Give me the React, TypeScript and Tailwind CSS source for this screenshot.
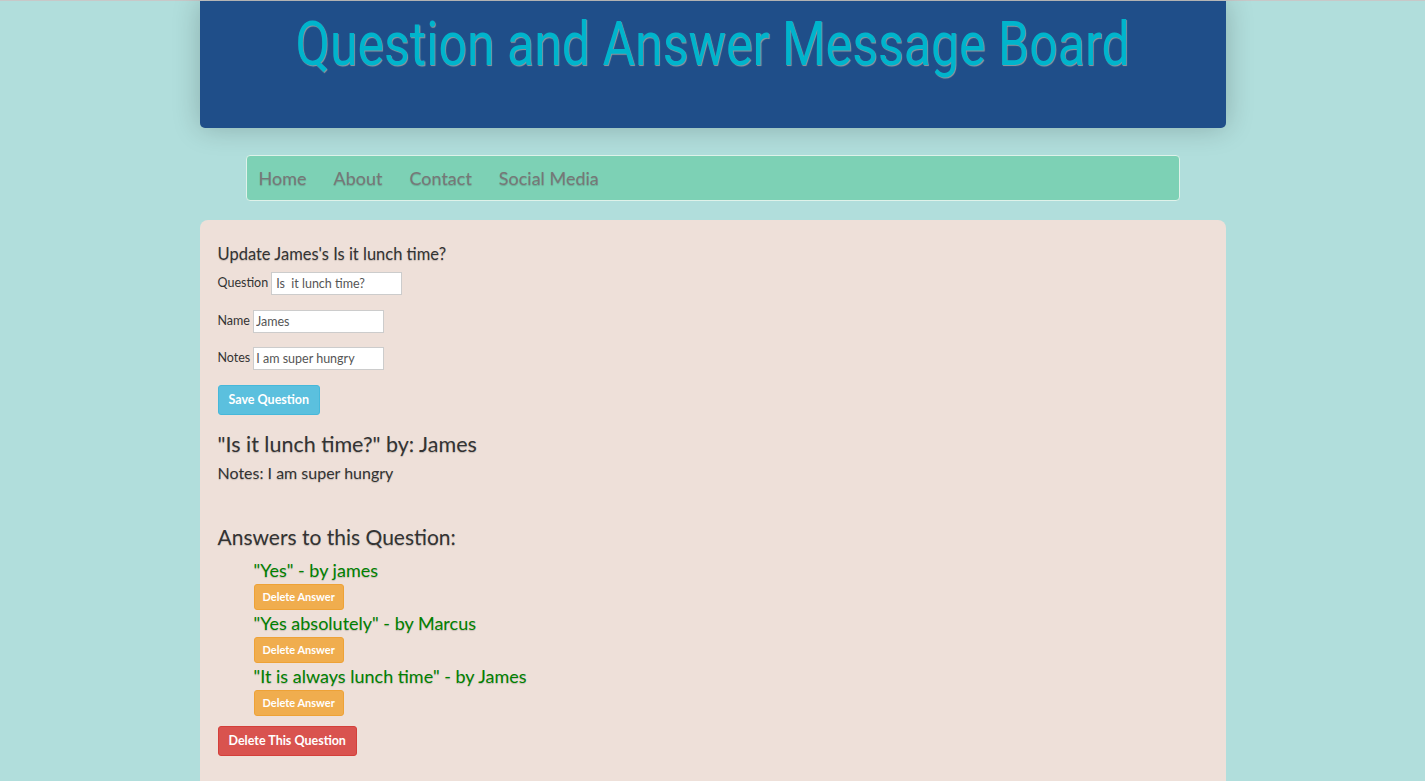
import React from 'react';

const answers = [
  { text: 'Yes', by: 'james' },
  { text: 'Yes absolutely', by: 'Marcus' },
  { text: 'It is always lunch time', by: 'James' },
];

const navLinks = ['Home', 'About', 'Contact', 'Social Media'];

const soft = '[text-shadow:0_1px_1px_rgba(0,0,0,0.18)]';

export default function App() {
  return (
    <div className="min-h-screen border-t border-[#c8c8c8] bg-[#b1dedc] font-['Lato',sans-serif] text-[#333]">
      <div className="mx-auto w-[1026px]">
        {/* header */}
        <header className="flex h-[127px] justify-center overflow-hidden rounded-b-[5px] bg-[#1f4e89] shadow-[0_0_28px_rgba(0,0,0,0.22)]">
          <h1 className="mt-[3px] scale-x-[0.82] whitespace-nowrap font-['Roboto',sans-serif] text-[61px] leading-[80px] text-[#00b4cc] [text-shadow:1px_1px_1px_rgba(160,160,160,0.9)]">
            Question and Answer Message Board
          </h1>
        </header>

        {/* nav */}
        <nav className="mx-[46px] mt-[27px] flex h-[46px] items-center rounded-[4px] border border-[#dff2ea] bg-[#7dd1b5] px-[12px]">
          {navLinks.map((link) => (
            <a key={link} href="#" className={`mr-[27px] text-[18px] text-[#777] ${soft}`}>
              {link}
            </a>
          ))}
        </nav>

        {/* main panel */}
        <main className="mt-[19px] min-h-[600px] rounded-[8px] bg-[#eee0d9] px-[18px] pt-[24px]">
          <p className={`text-[16.5px] leading-[20px] ${soft}`}>Update James's Is it lunch time?</p>

          <form className="mt-[8px] text-[12.5px] text-[#333]">
            <div className="flex items-center">
              <label className="mr-[3px]">Question</label>
              <input
                defaultValue="Is  it lunch time?"
                className="h-[23px] w-[131px] border border-[#ccc] bg-white px-[4px] text-[12.5px] text-[#555] outline-none"
              />
            </div>
            <div className="mt-[15px] flex items-center">
              <label className="mr-[3px]">Name</label>
              <input
                defaultValue="James"
                className="h-[23px] w-[131px] border border-[#ccc] bg-white px-[2px] text-[12.5px] text-[#555] outline-none"
              />
            </div>
            <div className="mt-[14px] flex items-center">
              <label className="mr-[3px]">Notes</label>
              <input
                defaultValue="I am super hungry"
                className="h-[23px] w-[131px] border border-[#ccc] bg-white px-[2px] text-[12.5px] text-[#555] outline-none"
              />
            </div>
            <button
              type="button"
              className="mt-[15px] block h-[30px] rounded-[3px] border border-[#46b8da] bg-[#5bc0de] px-[10px] text-[12.5px] font-bold text-white"
            >
              Save Question
            </button>
          </form>

          <h3 className={`mt-[15px] text-[21.5px] leading-[28px] ${soft}`}>"Is it lunch time?" by: James</h3>
          <p className={`mt-[5px] text-[16px] leading-[20px] ${soft}`}>Notes: I am super hungry</p>

          <h3 className={`mt-[40px] text-[21px] leading-[28px] ${soft}`}>Answers to this Question:</h3>
          <ul className="ml-[36px] mt-[7px]">
            {answers.map((a) => (
              <li key={a.text}>
                <p className={`text-[18px] leading-[24px] text-[#008000] ${soft}`}>
                  "{a.text}" - by {a.by}
                </p>
                <button
                  type="button"
                  className="mb-[1px] mt-[2px] block h-[26px] rounded-[3px] border border-[#eea236] bg-[#f0ad4e] px-[8px] text-[11px] font-bold text-white"
                >
                  Delete Answer
                </button>
              </li>
            ))}
          </ul>
          <button
            type="button"
            className="mt-[10px] block h-[30px] rounded-[3px] border border-[#d43f3a] bg-[#d9534f] px-[10px] text-[12.5px] font-bold text-white"
          >
            Delete This Question
          </button>

          <h3 className={`mt-[22px] text-[24px] font-bold leading-[28px] ${soft}`}>Add an Answer</h3>
        </main>
      </div>
    </div>
  );
}
